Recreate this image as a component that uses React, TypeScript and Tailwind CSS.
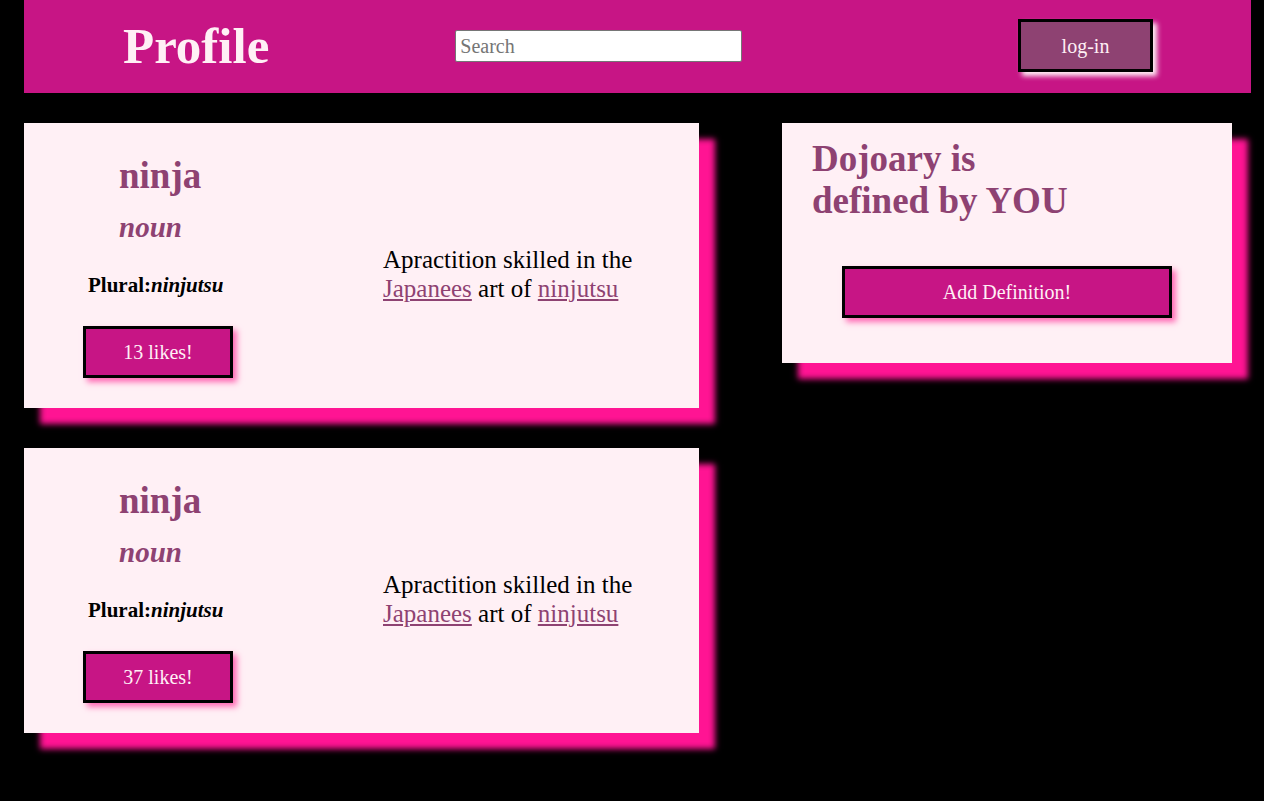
import React from 'react';

const serif = { fontFamily: '"Liberation Serif", serif' };

const entries = [
  { word: 'ninja', kind: 'noun', plural: 'ninjutsu', likes: 13 },
  { word: 'ninja', kind: 'noun', plural: 'ninjutsu', likes: 37 },
];

const Header: React.FC = () => (
  <header className="ml-[24px] w-[1227px] h-[93px] bg-[#c71585] flex items-center">
    <h1 className="ml-[99px] text-[51px] leading-[56px] font-bold text-[#fff0f5] -mt-[2px]">Profile</h1>
    <input
      type="text"
      placeholder="Search"
      className="ml-[186px] w-[287px] h-[32px] bg-white border border-[#767676] rounded-[2px] px-[4px] text-[20px] text-black placeholder:text-[#757575] -mt-[1px] outline-none"
      style={serif}
    />
    <button className="ml-auto mr-[98px] w-[135px] h-[53px] bg-[#8e4272] border-[3px] border-black text-[20px] text-[#fff0f5] shadow-[4px_4px_5px_#fff0f5] -mt-[2px]">
      log-in
    </button>
  </header>
);

const EntryCard: React.FC<{ word: string; kind: string; plural: string; likes: number }> = ({ word, kind, plural, likes }) => (
  <div className="w-[675px] h-[285px] bg-[#fff0f5] shadow-[16px_16px_6px_#ff1493] flex">
    <div className="w-[359px] pl-[59px] pt-[33px]">
      <h2 className="ml-[36px] text-[37px] leading-[40px] font-bold text-[#8e4272]">{word}</h2>
      <p className="ml-[36px] mt-[14px] text-[29px] leading-[34px] font-bold italic text-[#8e4272]">{kind}</p>
      <p className="ml-[5px] mt-[29px] text-[21px] leading-[24px] font-bold text-black">
        Plural:<i>{plural}</i>
      </p>
      <button className="mt-[29px] w-[150px] h-[52px] bg-[#c71585] border-[3px] border-black text-[20px] text-[#fff0f5] shadow-[4px_4px_6px_#ff69b4]">
        {likes} likes!
      </button>
    </div>
    <div className="pt-[122px] w-[280px]">
      <p className="text-[25px] leading-[29px] text-black">
        Apractition skilled in the{' '}
        <a href="#" className="text-[#8e4272] underline">Japanees</a> art of{' '}
        <a href="#" className="text-[#8e4272] underline">ninjutsu</a>
      </p>
    </div>
  </div>
);

const App: React.FC = () => {
  return (
    <div className="min-h-[801px] bg-black" style={serif}>
      <Header />
      <main className="flex mt-[30px] ml-[24px]">
        <div className="flex flex-col gap-[40px]">
          {entries.map((e, i) => (
            <EntryCard key={i} {...e} />
          ))}
        </div>
        <aside className="ml-[83px] w-[450px] h-[240px] bg-[#fff0f5] shadow-[16px_16px_6px_#ff1493] pl-[30px] pt-[15px]">
          <h2 className="text-[37px] leading-[42px] font-bold text-[#8e4272] w-[280px]">Dojoary is defined by YOU</h2>
          <button className="ml-[30px] mt-[44px] w-[330px] h-[52px] bg-[#c71585] border-[3px] border-black text-[20px] text-[#fff0f5] shadow-[4px_4px_6px_#ff69b4]">
            Add Definition!
          </button>
        </aside>
      </main>
    </div>
  );
};

export default App;
